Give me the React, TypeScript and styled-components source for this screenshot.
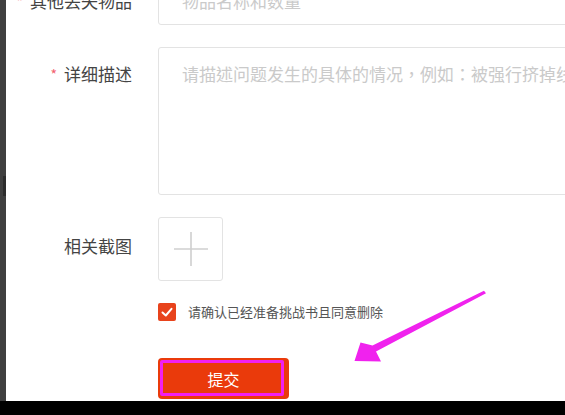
import styled, { createGlobalStyle } from "styled-components";

const GlobalStyle = createGlobalStyle`
  html, body {
    margin: 0;
    padding: 0;
    background: #fff;
    overflow: hidden;
  }
  * {
    box-sizing: border-box;
  }
`;

const font = `"Noto Sans CJK SC", "Microsoft YaHei", "Noto Sans", sans-serif`;

export default function App() {
    return (
        <Screen>
            <GlobalStyle />
            <Main>
                <SideStrip>
                    <Thumb />
                </SideStrip>
                <Content>
                    <Form>
                        <Row $align="center">
                            <Label>
                                <Star>*</Star>其他丢失物品
                            </Label>
                            <TextInput placeholder="物品名称和数量" />
                        </Row>
                        <Row $align="start">
                            <Label $top={13}>
                                <Star>*</Star>详细描述
                            </Label>
                            <TextArea placeholder="请描述问题发生的具体的情况，例如：被强行挤掉线了" />
                        </Row>
                        <Row $align="center">
                            <Label $top={-8}>相关截图</Label>
                            <Upload>
                                <PlusIcon viewBox="0 0 34 34">
                                    <line x1="0" y1="17" x2="34" y2="17" />
                                    <line x1="17" y1="0" x2="17" y2="34" />
                                </PlusIcon>
                            </Upload>
                        </Row>
                        <Row $align="center">
                            <span />
                            <Agree>
                                <CheckBox>
                                    <svg viewBox="0 0 18 18" width="18" height="18">
                                        <polyline
                                            points="4.5,9.5 7.8,12.5 13.5,5.8"
                                            fill="none"
                                            stroke="#fff"
                                            strokeWidth="2"
                                            strokeLinecap="round"
                                            strokeLinejoin="round"
                                        />
                                    </svg>
                                </CheckBox>
                                <AgreeText>请确认已经准备挑战书且同意删除</AgreeText>
                            </Agree>
                        </Row>
                        <Row $align="center" $gap={37}>
                            <span />
                            <Submit>提交</Submit>
                        </Row>
                    </Form>
                </Content>
            </Main>
            <BottomBar />
            <Arrow viewBox="0 0 565 415">
                <polygon
                    points="484,290.8 486,293.2 376,351.5 381,361.5 354.5,361 360.5,342.5 372.5,345.5"
                    fill="#f022ee"
                />
            </Arrow>
        </Screen>
    );
}

const Screen = styled.div`
  position: relative;
  width: 565px;
  height: 415px;
  display: flex;
  flex-direction: column;
  overflow: hidden;
  font-family: ${font};
`;

const Main = styled.div`
  flex: 1;
  display: flex;
  min-height: 0;
`;

const SideStrip = styled.div`
  width: 6px;
  background: #3f3f3f;
  padding-top: 176px;
  display: flex;
  justify-content: flex-end;
`;

const Thumb = styled.div`
  width: 3px;
  height: 20px;
  background: #2c2c2c;
`;

const Content = styled.div`
  flex: 1;
  background: #fff;
  overflow: hidden;
`;

const Form = styled.div`
  margin-top: -24px;
  display: flex;
  flex-direction: column;
`;

const Row = styled.div<{ $align: string; $gap?: number }>`
  display: grid;
  grid-template-columns: 126px 1fr;
  column-gap: 26px;
  align-items: ${(p) => p.$align};
  margin-top: ${(p) => (p.$gap ?? 22)}px;

  &:first-child {
    margin-top: 0;
  }
`;

const Label = styled.label<{ $top?: number }>`
  margin-top: ${(p) => p.$top ?? 0}px;
  text-align: right;
  font-size: 17px;
  line-height: 27px;
  color: #444;
  white-space: nowrap;
`;

const Star = styled.span`
  color: #f2606e;
  font-size: 14px;
  margin-right: 7px;
  vertical-align: 1px;
`;

const TextInput = styled.input`
  width: 463px;
  height: 49px;
  border: 1px solid #e3e3e3;
  border-radius: 3px;
  padding: 0 23px;
  font-family: ${font};
  font-size: 17px;
  color: #333;
  outline: none;

  &::placeholder {
    color: #cacaca;
  }
`;

const TextArea = styled.textarea`
  display: block;
  width: 463px;
  height: 148px;
  margin: 0;
  border: 1px solid #e3e3e3;
  border-radius: 3px;
  padding: 12px 23px;
  font-family: "Noto Sans CJK TC", ${font};
  font-size: 17px;
  line-height: 27px;
  color: #333;
  resize: none;
  outline: none;

  &::placeholder {
    color: #cacaca;
  }
`;

const Upload = styled.div`
  width: 65px;
  height: 64px;
  border: 1px solid #e3e3e3;
  border-radius: 3px;
  display: flex;
  align-items: center;
  justify-content: center;
`;

const PlusIcon = styled.svg`
  width: 34px;
  height: 34px;
  stroke: #cfcfcf;
  stroke-width: 1.6;
`;

const Agree = styled.div`
  display: flex;
  align-items: center;
  gap: 12px;
`;

const CheckBox = styled.span`
  width: 18px;
  height: 18px;
  border-radius: 2px;
  background: #e8431c;
  display: flex;
`;

const AgreeText = styled.span`
  font-size: 13px;
  color: #555;
  line-height: 18px;
`;

const Submit = styled.button`
  position: relative;
  width: 131px;
  height: 41px;
  border: none;
  border-radius: 4px;
  background: #ea3a0b;
  color: #fff;
  font-family: ${font};
  font-size: 16px;
  padding: 0;

  &::after {
    content: "";
    position: absolute;
    left: 2px;
    top: 2px;
    right: 5px;
    bottom: 3px;
    border: 3px solid #f21ff0;
    border-radius: 2px;
  }
`;

const BottomBar = styled.div`
  height: 14px;
  background: #000;
`;

const Arrow = styled.svg`
  position: absolute;
  left: 0;
  top: 0;
  width: 565px;
  height: 415px;
  pointer-events: none;
`;
